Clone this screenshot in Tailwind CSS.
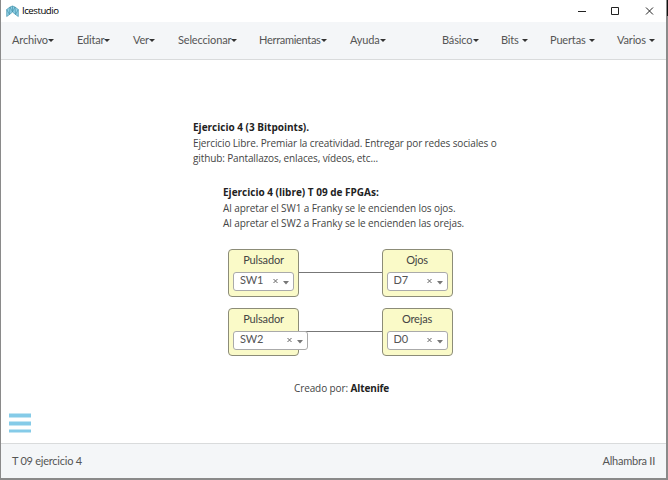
<!DOCTYPE html>
<html lang="es">
<head>
<meta charset="utf-8">
<title>Icestudio</title>
<script src="https://cdn.jsdelivr.net/npm/@tailwindcss/browser@4"></script>
</head>
<body class="w-[668px] h-[480px] overflow-hidden bg-white">
<div class="relative flex h-[480px] w-[668px] flex-col border-l border-[#8a8a8a] border-r-2 border-b-2 bg-white font-['Lato',sans-serif] text-[11px] tracking-[-0.16px] text-[#555]">
  <header class="flex h-[22px] shrink-0 items-center pl-[5px] text-black">
    <svg class="h-[13px] w-[13px]" viewBox="0 0 13 13" fill="#8fd0e6" stroke="#4594ac" stroke-width=".7" stroke-linejoin="round"><path d="M.7 4.500 4 2 6.500 1 9 2 12.300 4.500V11.500L9.500 9.500 6.500 7 3.500 9.500 .7 11.500Z"/><path d="M.7 4.500 3.500 9.500 4 2 6.500 7 9 2 9.500 9.500 12.300 4.500M6.500 1V7" fill="none"/></svg>
    <span class="ml-[3px] font-['Open_Sans',sans-serif] text-[9.600px] leading-none tracking-[-0.45px] whitespace-nowrap">Icestudio</span>
    <svg class="ml-auto mr-[11px] h-[10px] w-[80px]" viewBox="0 0 80 10" fill="none" stroke="#222" stroke-width="1"><path d="M3 5.500H11M36.500 1.500h7v7h-7ZM71 1.500l7 7M78 1.500l-7 7"/></svg>
  </header>
  <nav class="flex h-[38px] shrink-0 items-center justify-between border-b border-[#d9dbdc] bg-[#f4f6f8] pr-[11px] pl-[11px] whitespace-nowrap">
    <div class="flex gap-[23px]">
      <div class="flex w-[42px] items-center justify-between">Archivo<i class="border-x-[3px] border-t-[3px] border-x-transparent border-t-[#333]"></i></div>
      <div class="flex w-[33px] items-center justify-between">Editar<i class="border-x-[3px] border-t-[3px] border-x-transparent border-t-[#333]"></i></div>
      <div class="flex w-[22px] items-center justify-between">Ver<i class="border-x-[3px] border-t-[3px] border-x-transparent border-t-[#333]"></i></div>
      <div class="flex w-[59px] items-center justify-between">Seleccionar<i class="border-x-[3px] border-t-[3px] border-x-transparent border-t-[#333]"></i></div>
      <div class="-ml-px flex w-[68px] items-center justify-between tracking-[-0.3px]">Herramientas<i class="border-x-[3px] border-t-[3px] border-x-transparent border-t-[#333]"></i></div>
      <div class="flex w-[36px] items-center justify-between">Ayuda<i class="border-x-[3px] border-t-[3px] border-x-transparent border-t-[#333]"></i></div>
    </div>
    <div class="flex gap-[22px]">
      <div class="flex w-[37px] items-center justify-between">Básico<i class="border-x-[3px] border-t-[3px] border-x-transparent border-t-[#333]"></i></div>
      <div class="flex w-[27px] items-center justify-between">Bits<i class="border-x-[3px] border-t-[3px] border-x-transparent border-t-[#333]"></i></div>
      <div class="flex w-[45px] items-center justify-between">Puertas<i class="border-x-[3px] border-t-[3px] border-x-transparent border-t-[#333]"></i></div>
      <div class="flex w-[38px] items-center justify-between">Varios<i class="border-x-[3px] border-t-[3px] border-x-transparent border-t-[#333]"></i></div>
    </div>
  </nav>
  <main class="relative min-h-0 flex-1">
    <div class="absolute top-[60px] left-[192px] font-['Open_Sans',sans-serif] text-[10px] leading-[15.500px] tracking-[-0.125px] whitespace-nowrap text-[#444]">
      <p class="font-bold tracking-normal text-[#222]">Ejercicio 4 (3 Bitpoints).</p>
      <p>Ejercicio Libre. Premiar la creatividad. Entregar por redes sociales o</p>
      <p>github: Pantallazos, enlaces, vídeos, etc...</p>
    </div>
    <div class="absolute top-[125px] left-[222px] font-['Open_Sans',sans-serif] text-[10px] leading-[15.500px] tracking-[-0.09px] whitespace-nowrap text-[#444]">
      <p class="font-bold tracking-normal text-[#222]">Ejercicio 4 (libre) T 09 de FPGAs:</p>
      <p>Al apretar el SW1 a Franky se le encienden los ojos.</p>
      <p>Al apretar el SW2 a Franky se le encienden las orejas.</p>
    </div>
    <div class="absolute top-[212px] left-[297px] h-px w-[84px] bg-[#777]"></div>
    <div class="absolute top-[271px] left-[297px] h-px w-[84px] bg-[#777]"></div>
    <section class="absolute top-[189px] left-[227px] h-[48px] w-[71px] rounded-[4px] border border-[#8c8c78] bg-[#fafac8] px-1 pt-[3px]">
      <h2 class="text-center leading-[14px] text-[#444]">Pulsador</h2>
      <div class="mt-[5px] flex h-[19px] w-[61px] items-center rounded-[3px] border border-[#aaa] bg-white pr-[4px] pb-[2px] pl-[6px]">SW1<svg class="relative top-px ml-auto h-[7px] w-[17px]" viewBox="0 0 17 7"><path d="M1.500 1l4 4M5.500 1l-4 4" stroke="#666"/><path d="M11 3h6l-3 3.500Z" fill="#777"/></svg></div>
    </section>
    <section class="absolute top-[248px] left-[227px] h-[48px] w-[71px] rounded-[4px] border border-[#8c8c78] bg-[#fafac8] px-1 pt-[3px]">
      <h2 class="text-center leading-[14px] text-[#444]">Pulsador</h2>
      <div class="mt-[5px] flex h-[19px] w-[75px] items-center rounded-[3px] border border-[#aaa] bg-white pr-[4px] pb-[2px] pl-[6px]">SW2<svg class="relative top-px ml-auto h-[7px] w-[17px]" viewBox="0 0 17 7"><path d="M1.500 1l4 4M5.500 1l-4 4" stroke="#666"/><path d="M11 3h6l-3 3.500Z" fill="#777"/></svg></div>
    </section>
    <section class="absolute top-[189px] left-[380.500px] h-[48px] w-[71px] rounded-[4px] border border-[#8c8c78] bg-[#fafac8] px-1 pt-[3px]">
      <h2 class="text-center leading-[14px] text-[#444]">Ojos</h2>
      <div class="mt-[5px] flex h-[19px] w-[61px] items-center rounded-[3px] border border-[#aaa] bg-white pr-[4px] pb-[2px] pl-[6px]">D7<svg class="relative top-px ml-auto h-[7px] w-[17px]" viewBox="0 0 17 7"><path d="M1.500 1l4 4M5.500 1l-4 4" stroke="#666"/><path d="M11 3h6l-3 3.500Z" fill="#777"/></svg></div>
    </section>
    <section class="absolute top-[248px] left-[380.500px] h-[48px] w-[71px] rounded-[4px] border border-[#8c8c78] bg-[#fafac8] px-1 pt-[3px]">
      <h2 class="text-center leading-[14px] text-[#444]">Orejas</h2>
      <div class="mt-[5px] flex h-[19px] w-[61px] items-center rounded-[3px] border border-[#aaa] bg-white pr-[4px] pb-[2px] pl-[6px]">D0<svg class="relative top-px ml-auto h-[7px] w-[17px]" viewBox="0 0 17 7"><path d="M1.500 1l4 4M5.500 1l-4 4" stroke="#666"/><path d="M11 3h6l-3 3.500Z" fill="#777"/></svg></div>
    </section>
    <p class="absolute top-[321px] left-[293px] font-['Open_Sans',sans-serif] text-[10px] leading-[15px] tracking-[-0.11px] whitespace-nowrap text-[#444]">Creado por: <b class="text-[#222]">Altenife</b></p>
    <svg class="absolute top-[353px] left-[8px] h-[20px] w-[22px]" viewBox="0 0 22 20" fill="#85cbe8"><path d="M0 .5H22V4.500H0ZM0 8.500H22V12.500H0ZM0 16.500H22V19.500H0Z"/></svg>
  </main>
  <footer class="flex h-[35px] shrink-0 items-center justify-between border-t border-[#d9dbdc] bg-[#f4f6f8] px-[11px] tracking-[-0.25px] whitespace-nowrap">
    <span>T 09 ejercicio 4</span><span>Alhambra II</span>
  </footer>
  <div class="absolute top-0 -right-[2px] h-[16px] w-px bg-[#111]"></div>
</div>
</body>
</html>
